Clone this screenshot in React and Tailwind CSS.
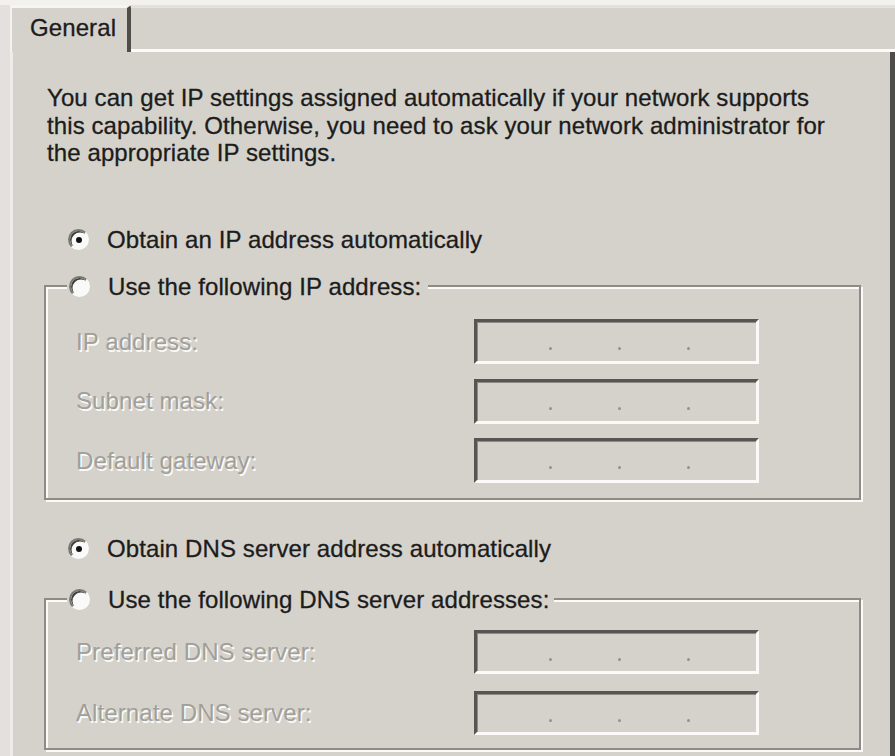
import React from "react";

function Radio({ checked }) {
  return (
    <span className="flex h-[21px] w-[21px] shrink-0 items-center justify-center rounded-full border-[2px] border-t-[#7a7873] border-l-[#7a7873] border-b-[#fbfaf8] border-r-[#fbfaf8] bg-[#f9f9f8] shadow-[inset_1.5px_1.5px_0_#3f3e3b]">
      {checked ? <span className="h-[6px] w-[6px] rounded-full bg-[#111]" /> : null}
    </span>
  );
}

function RadioRow({ checked, label }) {
  return (
    <div className="flex h-[27.5px] items-center gap-[18px]">
      <Radio checked={checked} />
      <span className="text-[#1c1c1c] [-webkit-text-stroke:0.3px_#1c1c1c]">{label}</span>
    </div>
  );
}

function IpBox({ h }) {
  return (
    <div
      className={`flex w-[285px] items-start gap-[66px] border-[3px] border-t-[#575551] border-l-[#575551] border-b-[#fbfaf8] border-r-[#fbfaf8] pl-[72px] shadow-[inset_1px_1px_0_#8d8b86] ${h}`}
    >
      <span className="mt-[25px] h-[3px] w-[3px] rounded-full bg-[#94928d]" />
      <span className="mt-[25px] h-[3px] w-[3px] rounded-full bg-[#94928d]" />
      <span className="mt-[25px] h-[3px] w-[3px] rounded-full bg-[#94928d]" />
    </div>
  );
}

function Field({ label, h }) {
  return (
    <div className="flex items-center pl-[30px]">
      <span className="w-[398px] text-[#a19f9a] [text-shadow:1.5px_1.5px_0_#fbfaf8]">{label}</span>
      <IpBox h={h} />
    </div>
  );
}

function Group({ title, pr, children, className }) {
  return (
    <fieldset
      className={`ml-[31px] w-[817px] border-2 border-[#8e8b85] shadow-[inset_2px_2px_0_#fbfaf8,2px_2px_0_#fbfaf8] ${className}`}
    >
      <legend className={`ml-[21px] bg-[#d5d2cb] pl-[2px] ${pr}`}>
        <RadioRow checked={false} label={title} />
      </legend>
      {children}
    </fieldset>
  );
}

export default function App() {
  return (
    <div className="h-[756px] w-[895px] overflow-hidden bg-[#e3e1dd] font-['Liberation_Sans',Arial,sans-serif] text-[24px] leading-[27.5px] tracking-[0.1px]">
      <div className="h-[5px] bg-[#f2f1ee]" />
      <div className="flex h-[47px]">
        <div className="w-[10px]" />
        <div className="w-[121px] rounded-tr-[3px] border-t-[3px] border-l-2 border-r-[4px] border-t-[#f6f5f2] border-l-[#f3f2ef] border-r-[#4f4d4a] bg-[#d5d2cb] pt-[5.5px] pl-[18px] text-[#1c1c1c] [-webkit-text-stroke:0.3px_#1c1c1c]">
          General
        </div>
        <div className="mt-[3px] flex-1 border-b-[3px] border-b-[#fbfaf8] bg-[#d5d2cb]" />
      </div>
      <div className="ml-[10px] h-[704px] w-[885px] border-l-[3px] border-r-[5px] border-l-[#eeece8] border-r-[#4f4d4a] bg-[#d5d2cb]">
        <p className="ml-[34px] pt-[32px] text-[#1c1c1c] [-webkit-text-stroke:0.3px_#1c1c1c]">
          You can get IP settings assigned automatically if your network supports
          <br />
          this capability. Otherwise, you need to ask your network administrator for
          <br />
          the appropriate IP settings.
        </p>
        <div className="ml-[55px] mt-[59.5px]">
          <RadioRow checked label="Obtain an IP address automatically" />
        </div>
        <Group title="Use the following IP address:" pr="pr-[7px]" className="mt-[19px] pt-[19px] pb-[15px]">
          <div className="flex flex-col gap-[14.5px]">
            <Field label="IP address:" h="h-[45px]" />
            <Field label="Subnet mask:" h="h-[45px]" />
            <Field label="Default gateway:" h="h-[45px]" />
          </div>
        </Group>
        <div className="ml-[55px] mt-[35px]">
          <RadioRow checked label="Obtain DNS server address automatically" />
        </div>
        <Group title="Use the following DNS server addresses:" pr="pr-[5px]" className="mt-[23px] pt-[17px] pb-[13px]">
          <div className="flex flex-col gap-[17px]">
            <Field label="Preferred DNS server:" h="h-[44px]" />
            <Field label="Alternate DNS server:" h="h-[44px]" />
          </div>
        </Group>
      </div>
    </div>
  );
}
